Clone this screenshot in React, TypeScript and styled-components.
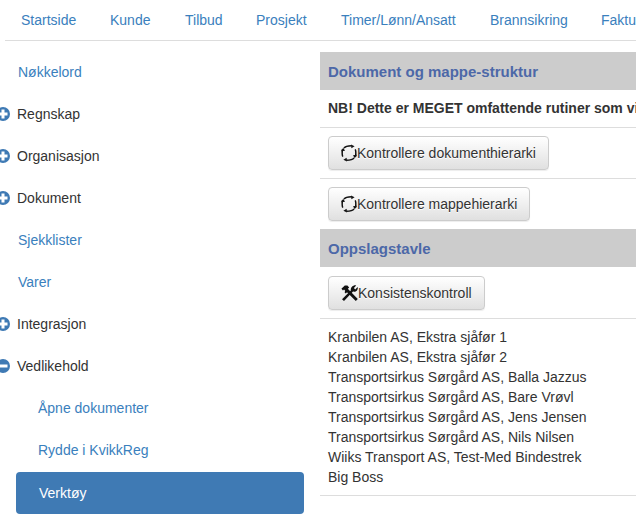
import { createGlobalStyle, styled } from 'styled-components';

const GlobalStyle = createGlobalStyle`
  html, body {
    margin: 0;
    height: 100%;
    overflow: hidden;
    background: #fff;
  }
  body {
    font-family: "Liberation Sans", Arial, sans-serif;
    font-size: 14px;
    line-height: 20px;
    color: #333;
  }
`;

const Page = styled.div`
  width: 636px;
  height: 525px;
  overflow: hidden;
`;

const TopNav = styled.nav`
  display: flex;
  margin-left: 5px;
  padding-left: 16px;
  height: 40px;
  box-sizing: content-box;
  border-bottom: 1px solid #ddd;
  white-space: nowrap;
  overflow: hidden;
`;

const TopLink = styled.a<{ $width: number }>`
  flex: none;
  width: ${p => p.$width}px;
  line-height: 40px;
  color: #3a80bd;
`;

const Columns = styled.div`
  display: grid;
  grid-template-columns: 320px 316px;
`;

const Sidebar = styled.ul`
  list-style: none;
  margin: 0;
  padding: 10px 0 0;
`;

const SideItem = styled.li<{ $sub?: boolean; $active?: boolean }>`
  height: 42px;
  margin: ${p => (p.$active ? '1px' : '0')} 16px 0 ${p => (p.$sub ? '16px' : '0')};
  padding-left: ${p => (p.$active ? '23px' : p.$sub ? '22px' : '18px')};
  line-height: 42px;
  border-radius: 4px;
  color: ${p => (p.$active ? '#fff' : '#3a80bd')};
  background: ${p => (p.$active ? '#3f7ab4' : 'transparent')};
`;

const TreeItem = styled.li`
  display: flex;
  align-items: center;
  gap: 7px;
  height: 42px;
  margin-left: -4px;
  color: #333;
`;

const Main = styled.main`
  padding-top: 11px;
  min-width: 0;
`;

const SectionHead = styled.h3`
  margin: 0;
  height: 38px;
  padding: 0 8px;
  background: #ccc;
  color: #4c68a8;
  font-size: 15px;
  font-weight: 700;
  line-height: 39px;
`;

const NoteRow = styled.div`
  height: 37px;
  padding: 0 8px;
  line-height: 37px;
  font-weight: 700;
  white-space: nowrap;
  overflow: hidden;
  border-bottom: 1px solid #ddd;
`;

const ButtonRow = styled.div<{ $first?: boolean; $flat?: boolean }>`
  padding: ${p => (p.$first ? '9px' : '8px')} 8px 8px;
  border-bottom: ${p => (p.$flat ? '0' : '1px solid #ddd')};
`;

const ToolButton = styled.button`
  display: inline-flex;
  align-items: center;
  height: 34px;
  padding: 0 12px;
  border: 1px solid #ccc;
  border-radius: 4px;
  background: linear-gradient(to bottom, #fff 0%, #e0e0e0 100%);
  box-shadow: inset 0 1px 0 rgba(255, 255, 255, 0.15), 0 1px 1px rgba(0, 0, 0, 0.075);
  color: #333;
  font: inherit;
  text-shadow: 0 1px 0 #fff;
`;

const BoardList = styled.div`
  padding: 8px;
  border-bottom: 1px solid #ddd;
`;

const BoardLine = styled.div`
  height: 20px;
  white-space: nowrap;
`;

const TreeIcon = ({ open }: { open?: boolean }) => (
  <svg width="14" height="14" viewBox="0 0 14 14" style={{ flex: 'none' }}>
    <circle cx="7" cy="7" r="7" fill="#3f7ab4" />
    {open ? (
      <rect x="2.5" y="5.5" width="9" height="3" fill="#fff" />
    ) : (
      <path d="M5.5 2.5h3v3h3v3h-3v3h-3v-3h-3v-3h3z" fill="#fff" />
    )}
  </svg>
);

const RefreshIcon = () => (
  <svg width="16" height="18" viewBox="0 0 16 18" style={{ flex: 'none' }} fill="none" stroke="#111" strokeWidth="1.5">
    <path d="M3 4.2Q4.6 1.8 10.6 1.8" />
    <path d="M14.2 5.4Q15.2 7 14.6 12.6" />
    <path d="M13 13.8Q11.4 16.2 5.4 16.2" />
    <path d="M1.8 12.6Q0.8 11 1.4 5.4" />
    <path d="M10 0.4L13.6 2.2L10.4 4.2z" fill="#111" stroke="none" />
    <path d="M16 10.8L13.8 14.2L12 11.2z" fill="#111" stroke="none" />
    <path d="M6 17.6L2.4 15.8L5.6 13.8z" fill="#111" stroke="none" />
    <path d="M0 7.2L2.2 3.8L4 6.8z" fill="#111" stroke="none" />
  </svg>
);

const ToolsIcon = () => (
  <svg width="17" height="18" viewBox="0 0 17 18" style={{ flex: 'none' }} fill="#111">
    <path d="M1 15.2L9.8 6.6C9.4 4.2 10.6 2 13 1.4C13.8 1.2 14.6 1.3 15.2 1.6L12.9 3.9L14.2 5.4L16.6 3.1C17 4.2 16.8 5.5 16 6.4C15 7.5 13.5 8 12 7.6L3 17z" />
    <path d="M0.4 4.8L3.8 1.4L6.4 1.6L8.2 3.4L6.8 4.8L8 6L16.8 15L14.8 17L6 8.2L4.8 9.4L3.6 8.2L4.2 6.8L3 5.6L2 6.4z" />
  </svg>
);

const navItems: [string, number][] = [
  ['Startside', 89],
  ['Kunde', 75],
  ['Tilbud', 71],
  ['Prosjekt', 85],
  ['Timer/Lønn/Ansatt', 149],
  ['Brannsikring', 111],
  ['Fakturering', 90],
];

const board = [
  'Kranbilen AS, Ekstra sjåfør 1',
  'Kranbilen AS, Ekstra sjåfør 2',
  'Transportsirkus Sørgård AS, Balla Jazzus',
  'Transportsirkus Sørgård AS, Bare Vrøvl',
  'Transportsirkus Sørgård AS, Jens Jensen',
  'Transportsirkus Sørgård AS, Nils Nilsen',
  'Wiiks Transport AS, Test-Med Bindestrek',
  'Big Boss',
];

export default function App() {
  return (
    <Page>
      <GlobalStyle />
      <TopNav>
        {navItems.map(([label, width]) => (
          <TopLink key={label} $width={width}>{label}</TopLink>
        ))}
      </TopNav>
      <Columns>
        <Sidebar>
          <SideItem>Nøkkelord</SideItem>
          <TreeItem><TreeIcon />Regnskap</TreeItem>
          <TreeItem><TreeIcon />Organisasjon</TreeItem>
          <TreeItem><TreeIcon />Dokument</TreeItem>
          <SideItem>Sjekklister</SideItem>
          <SideItem>Varer</SideItem>
          <TreeItem><TreeIcon />Integrasjon</TreeItem>
          <TreeItem><TreeIcon open />Vedlikehold</TreeItem>
          <SideItem $sub>Åpne dokumenter</SideItem>
          <SideItem $sub>Rydde i KvikkReg</SideItem>
          <SideItem $sub $active>Verktøy</SideItem>
        </Sidebar>
        <Main>
          <SectionHead>Dokument og mappe-struktur</SectionHead>
          <NoteRow>NB! Dette er MEGET omfattende rutiner som vil ta lang tid å kjøre</NoteRow>
          <ButtonRow>
            <ToolButton><RefreshIcon />Kontrollere dokumenthierarki</ToolButton>
          </ButtonRow>
          <ButtonRow $flat>
            <ToolButton><RefreshIcon />Kontrollere mappehierarki</ToolButton>
          </ButtonRow>
          <SectionHead>Oppslagstavle</SectionHead>
          <ButtonRow $first>
            <ToolButton><ToolsIcon />Konsistenskontroll</ToolButton>
          </ButtonRow>
          <BoardList>
            {board.map(line => (
              <BoardLine key={line}>{line}</BoardLine>
            ))}
          </BoardList>
        </Main>
      </Columns>
    </Page>
  );
}
